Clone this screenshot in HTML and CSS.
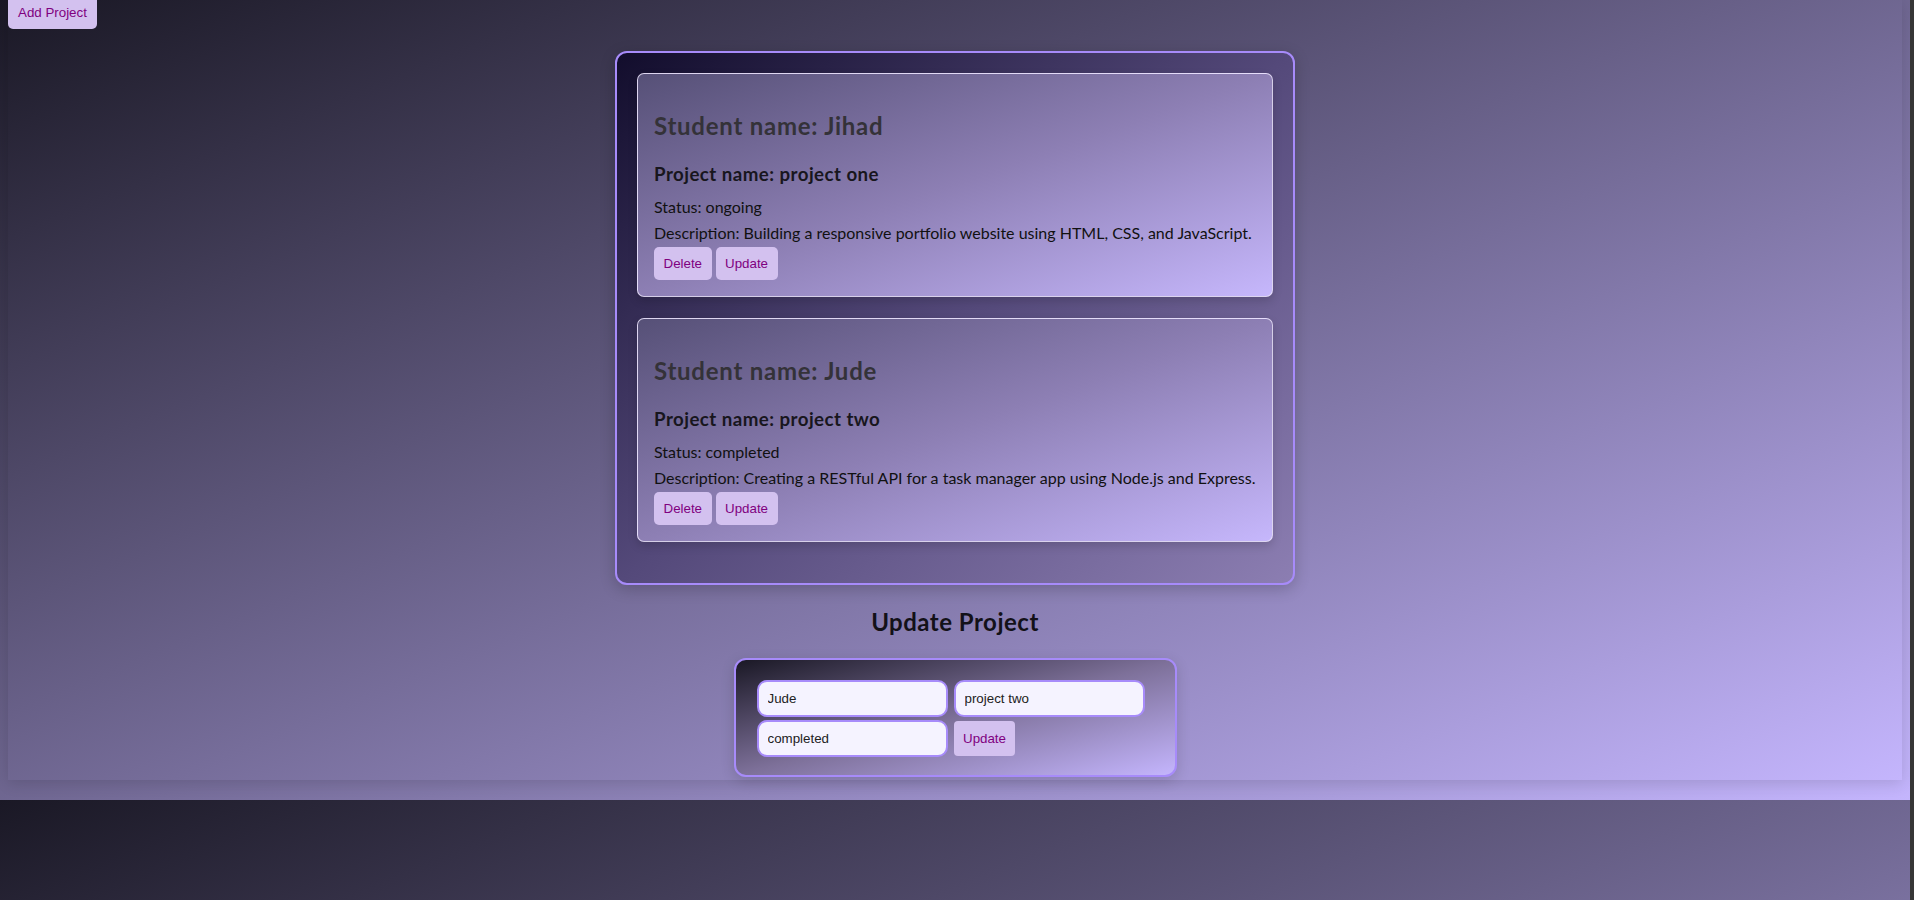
FILE: index.html
```html
<!DOCTYPE html>
<html lang="en">
<head>
<meta charset="utf-8">
<title>Student Projects</title>
<link rel="stylesheet" href="styles.css">
</head>
<body>
<div class="panel">
  <button class="btn add-btn" type="button">Add Project</button>
  <section class="projects">
    <article class="card">
      <h2 class="student">Student name: Jihad</h2>
      <h3 class="project">Project name: project one</h3>
      <p class="info">Status: ongoing</p>
      <p class="info">Description: Building a responsive portfolio website using HTML, CSS, and JavaScript.</p>
      <div class="actions">
        <button class="btn" type="button">Delete</button>
        <button class="btn" type="button">Update</button>
      </div>
    </article>
    <article class="card">
      <h2 class="student">Student name: Jude</h2>
      <h3 class="project">Project name: project two</h3>
      <p class="info">Status: completed</p>
      <p class="info">Description: Creating a RESTful API for a task manager app using Node.js and Express.</p>
      <div class="actions">
        <button class="btn" type="button">Delete</button>
        <button class="btn" type="button">Update</button>
      </div>
    </article>
  </section>
  <h2 class="form-title">Update Project</h2>
  <form class="update-form">
    <input class="field" type="text" value="Jude">
    <input class="field" type="text" value="project two">
    <input class="field" type="text" value="completed">
    <button class="btn form-btn" type="button">Update</button>
  </form>
</div>
</body>
</html>
```

FILE: styles.css
```css
html {
  background: #363636;
}

body {
  margin: 0;
  width: 1910px;
  height: 900px;
  overflow: hidden;
  background: linear-gradient(to bottom right, #1a1825 0%, #c4b5fd 100%) 0 0 / 1910px 800px repeat-y;
  font-family: "Lato", "Segoe UI", sans-serif;
}

.panel {
  margin: 0 8px;
  height: 780px;
  box-sizing: border-box;
  display: flex;
  flex-direction: column;
  align-items: center;
  background: linear-gradient(to bottom right, #1a1825 0%, #c4b5fd 100%);
  box-shadow: 0 4px 14px rgba(0, 0, 0, 0.12);
}

.btn {
  border: none;
  border-radius: 5px;
  background: #d3c1ef;
  color: #800080;
  font-family: "Liberation Sans", Arial, sans-serif;
  font-size: 13.33px;
  line-height: 15px;
  padding: 9px 9.5px;
  cursor: pointer;
}

.add-btn {
  align-self: flex-start;
  margin-top: -4px;
  padding: 9px 10px;
}

.projects {
  width: 680px;
  box-sizing: border-box;
  margin-top: 22px;
  padding: 20px 20px 20px;
  border: 2px solid #a78bfa;
  border-radius: 12px;
  background: linear-gradient(to bottom right, #120d2c 0%, #54497a 50%, #8c7eb2 100%);
  box-shadow: 0 4px 16px rgba(0, 0, 0, 0.2);
}

.card {
  margin-bottom: 21px;
  padding: 16px;
  border: 1px solid rgba(235, 228, 250, 0.85);
  border-radius: 7px;
  background: linear-gradient(to bottom right, #565077 0%, #8d7fb4 50%, #c6b7fc 100%);
  box-shadow: 0 4px 10px rgba(0, 0, 0, 0.15);
}

.student {
  margin: 20px 0 20px;
  font-size: 24px;
  line-height: 32px;
  font-weight: 700;
  letter-spacing: 0.75px;
  color: #343238;
}

.project {
  margin: 0 0 9px;
  font-size: 18.72px;
  line-height: 25px;
  font-weight: 700;
  letter-spacing: 0.45px;
  color: #18161d;
}

.info {
  margin: 0 0 5px;
  font-size: 16px;
  line-height: 21px;
  color: #111;
}

.actions {
  display: flex;
  gap: 4px;
  margin-top: -1px;
}

.form-title {
  margin: 21px 0 20px;
  font-size: 24px;
  line-height: 32px;
  font-weight: 700;
  letter-spacing: 0.5px;
  color: #131118;
}

.update-form {
  width: 443px;
  box-sizing: border-box;
  padding: 20px 20px 18px 21px;
  border: 2px solid #a78bfa;
  border-radius: 12px;
  display: flex;
  flex-wrap: wrap;
  row-gap: 3px;
  column-gap: 6px;
  align-items: flex-start;
  background: linear-gradient(to bottom right, #1a1825 0%, #7d7099 50%, #c4b5fd 100%);
  box-shadow: 0 4px 14px rgba(0, 0, 0, 0.15);
}

.field {
  width: 191px;
  height: 37px;
  box-sizing: border-box;
  padding: 0 9px;
  border: 2px solid #a78bfa;
  border-radius: 10px;
  background: #f5f3ff;
  color: #222;
  font-family: "Liberation Sans", Arial, sans-serif;
  font-size: 13.33px;
}

.form-btn {
  margin-top: 1px;
  height: 35px;
  border-radius: 4px;
  padding: 0 9.5px;
}
```
